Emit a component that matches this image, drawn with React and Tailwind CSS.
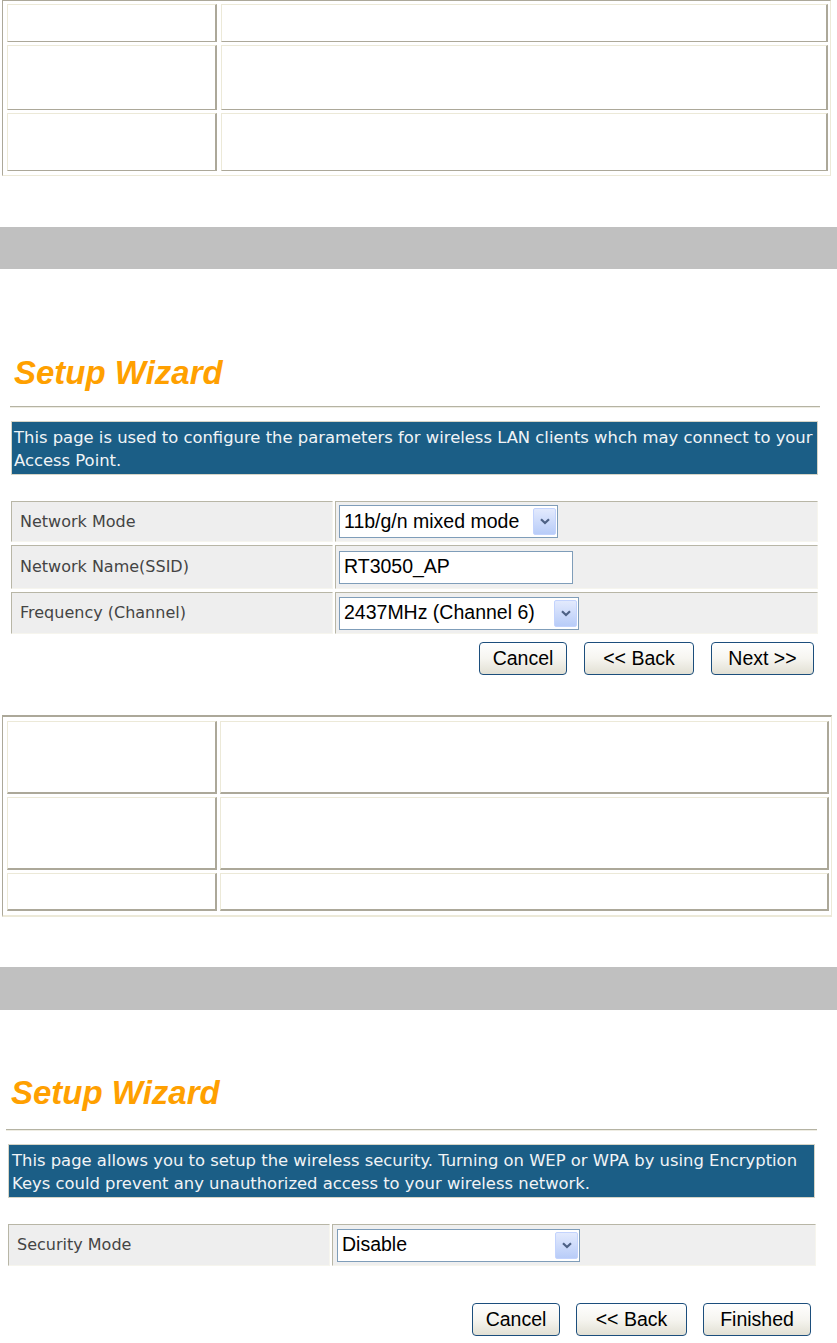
import React from "react";

const Chevron = () => (
  <svg width="10" height="7" viewBox="0 0 10 7">
    <path d="M1 1.2 L5 5 L9 1.2" fill="none" stroke="#4d6185" strokeWidth="2.2" />
  </svg>
);

const Select = ({ w, text }) => (
  <div
    className={`${w} h-[33px] flex items-center border border-[#7f9db9] bg-white pl-[4px] pr-[1px] text-[19.5px] text-black font-['Liberation_Sans',Arial,sans-serif]`}
  >
    <span className="flex-1 whitespace-nowrap">{text}</span>
    <div className="w-[23px] h-[27px] flex items-center justify-center rounded-[2px] border border-[#c3d3fd] bg-linear-to-b from-[#e3eafd] to-[#b8ccf8]">
      <Chevron />
    </div>
  </div>
);

const Button = ({ w, children }) => (
  <div
    className={`${w} h-[33px] flex items-center justify-center rounded-[4px] border border-[#1c4e7c] bg-linear-to-b from-white via-[#f6f5f0] to-[#e2e0d4] text-[19.5px] text-black font-['Liberation_Sans',Arial,sans-serif]`}
  >
    {children}
  </div>
);

const FormRow = ({ h, col1, label, children }) => (
  <div className={`flex gap-[2px] ${h}`}>
    <div
      className={`${col1} flex items-center pl-[8px] bg-[#eeeeee] border-t border-l border-b border-r border-t-[#b8b6a6] border-l-[#b8b6a6] border-b-[#f6f5ee] border-r-[#f6f5ee] text-[16px] text-[#444] font-['DejaVu_Sans',Verdana,sans-serif]`}
    >
      {label}
    </div>
    <div className="flex-1 flex items-center pl-[3px] bg-[#efefef] border-t border-l border-b border-r border-t-[#b8b6a6] border-l-[#b8b6a6] border-b-[#f6f5ee] border-r-[#f6f5ee]">
      {children}
    </div>
  </div>
);

const Title = ({ pad }) => (
  <div
    className={`${pad} text-[33px] leading-none font-bold italic text-[#ffa000] font-['Liberation_Sans',Arial,sans-serif]`}
  >
    Setup Wizard
  </div>
);

const Rule = ({ mt }) => (
  <div className={`${mt} h-[2px] border-t border-b border-t-[#b5b3a3] border-b-[#eeece2]`} />
);

const Banner = ({ mx, pl, children }) => (
  <div
    className={`${mx} mt-[13px] h-[54px] bg-[#1b5e86] border border-[#d6d4c6] ${pl} pt-[4px] text-[16.4px] leading-[23px] text-[#f1f4f6] whitespace-nowrap font-['DejaVu_Sans',Verdana,sans-serif]`}
  >
    {children}
  </div>
);

const cell1 =
  "bg-white border-t border-l border-r-2 border-b border-t-[#ece9d8] border-l-[#ece9d8] border-r-[#aca899] border-b-[#aca899]";
const cell2 =
  "bg-white border-t border-l border-r-2 border-b-2 border-t-[#ece9d8] border-l-[#ece9d8] border-r-[#aca899] border-b-[#aca899]";

export default function App() {
  return (
    <div className="w-[837px] min-h-[1343px] bg-white">
      {/* upper empty table */}
      <div className="ml-[2px] w-[829px] border-t border-l border-r border-b border-t-[#aca899] border-l-[#aca899] border-r-[#ece9d8] border-b-[#ece9d8] pt-[3px] pl-[4px] pr-[2px] pb-[4px]">
        <div className="grid grid-cols-[210px_607px] gap-x-[4px] gap-y-[3px]">
          <div className={`${cell1} h-[38px]`} />
          <div className={`${cell1} h-[38px]`} />
          <div className={`${cell1} h-[65px]`} />
          <div className={`${cell1} h-[65px]`} />
          <div className={`${cell1} h-[58px]`} />
          <div className={`${cell1} h-[58px]`} />
        </div>
      </div>

      <div className="mt-[51px] h-[42px] bg-[#c0c0c0]" />

      {/* wizard: wireless settings */}
      <div className="ml-[10px] w-[810px] mt-[87px]">
        <Title pad="pl-[4px]" />
        <Rule mt="mt-[17px]" />
        <Banner mx="ml-[1px] mr-[2px]" pl="pl-[2px]">
          This page is used to configure the parameters for wireless LAN clients whch may connect to your
          <br />
          Access Point.
        </Banner>
        <div className="ml-[1px] mr-[2px] mt-[26px] flex flex-col gap-[3px]">
          <FormRow h="h-[41px]" col1="w-[322px]" label="Network Mode">
            <Select w="w-[219px]" text="11b/g/n mixed mode" />
          </FormRow>
          <FormRow h="h-[44px]" col1="w-[322px]" label="Network Name(SSID)">
            <div className="w-[234px] h-[33px] flex items-center border border-[#7f9db9] bg-white pl-[4px] text-[19.5px] text-black font-['Liberation_Sans',Arial,sans-serif]">
              RT3050_AP
            </div>
          </FormRow>
          <FormRow h="h-[42px]" col1="w-[322px]" label="Frequency (Channel)">
            <Select w="w-[240px]" text="2437MHz (Channel 6)" />
          </FormRow>
        </div>
        <div className="mt-[8px] pr-[6px] flex justify-end gap-[17px]">
          <Button w="w-[88px]">Cancel</Button>
          <Button w="w-[110px]">&lt;&lt; Back</Button>
          <Button w="w-[103px]">Next &gt;&gt;</Button>
        </div>
      </div>

      {/* lower empty table */}
      <div className="mt-[40px] ml-[2px] w-[830px] border-t-2 border-l border-r border-b-2 border-t-[#aca899] border-l-[#aca899] border-r-[#ece9d8] border-b-[#ece9d8] pt-[4px] pl-[4px] pr-[1px] pb-[4px]">
        <div className="grid grid-cols-[210px_609px] gap-x-[3px] gap-y-[3px]">
          <div className={`${cell2} h-[73px]`} />
          <div className={`${cell2} h-[73px]`} />
          <div className={`${cell2} h-[73px]`} />
          <div className={`${cell2} h-[73px]`} />
          <div className={`${cell2} h-[38px]`} />
          <div className={`${cell2} h-[38px]`} />
        </div>
      </div>

      <div className="mt-[50px] h-[43px] bg-[#c0c0c0]" />

      {/* wizard: security */}
      <div className="ml-[6px] w-[811px] mt-[66px] pb-[10px]">
        <Title pad="pl-[5px]" />
        <Rule mt="mt-[20px]" />
        <Banner mx="ml-[2px] mr-[2px]" pl="pl-[3px]">
          This page allows you to setup the wireless security. Turning on WEP or WPA by using Encryption
          <br />
          Keys could prevent any unauthorized access to your wireless network.
        </Banner>
        <div className="ml-[2px] mr-[1px] mt-[26px]">
          <FormRow h="h-[42px]" col1="w-[322px]" label="Security Mode">
            <div className="ml-[1px]">
              <Select w="w-[243px]" text="Disable" />
            </div>
          </FormRow>
        </div>
        <div className="mt-[37px] pr-[6px] flex justify-end gap-[16px]">
          <Button w="w-[88px]">Cancel</Button>
          <Button w="w-[111px]">&lt;&lt; Back</Button>
          <Button w="w-[108px]">Finished</Button>
        </div>
      </div>
    </div>
  );
}
